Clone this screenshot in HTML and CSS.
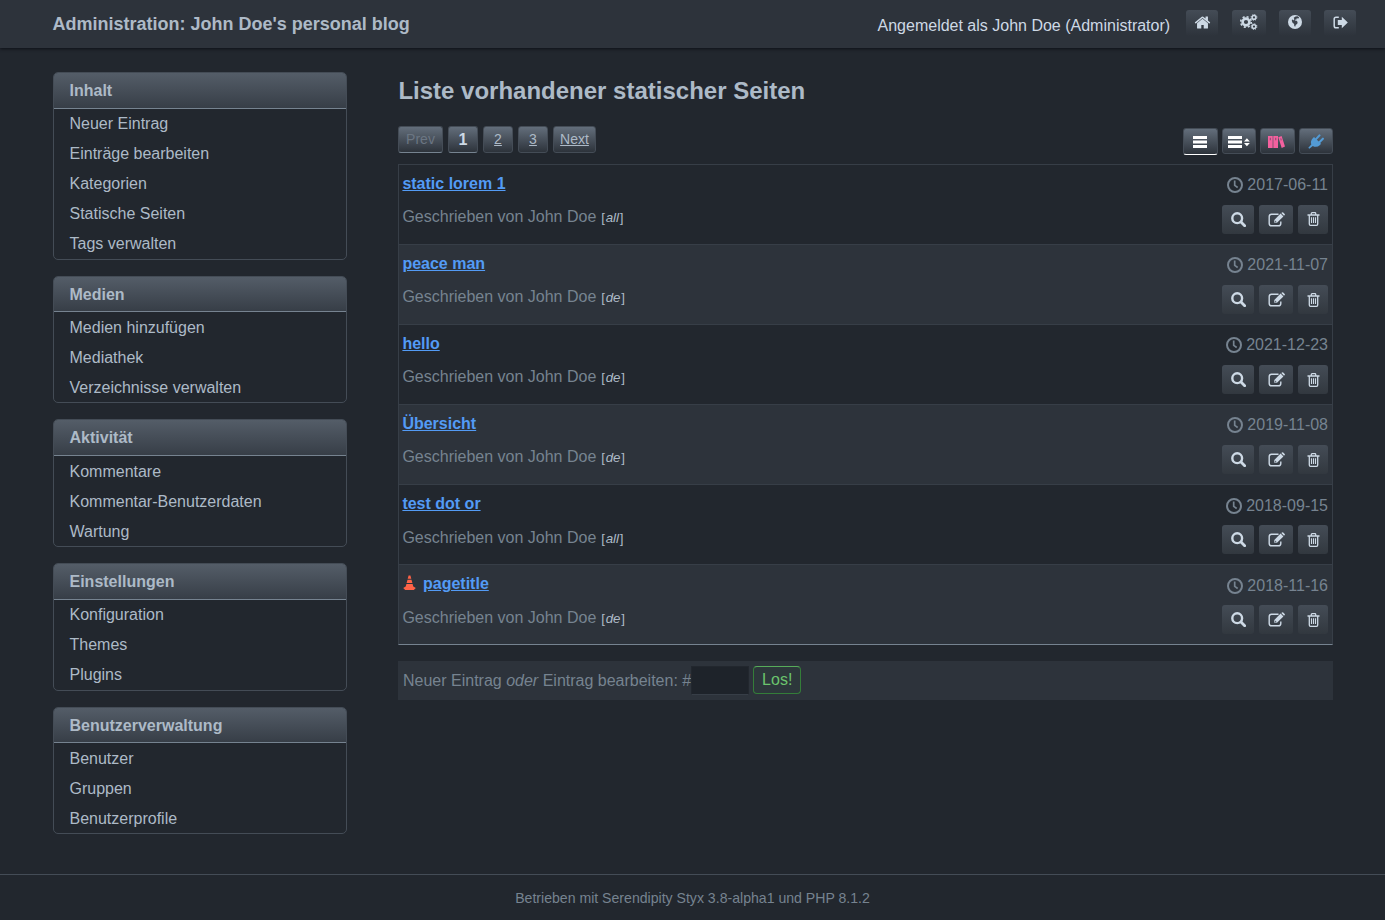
FILE: index.html
```html
<!DOCTYPE html>
<html lang="de">
<head>
<meta charset="utf-8">
<title>Administration</title>
<link rel="stylesheet" href="styles.css">
</head>
<body>
<svg class="sprite" aria-hidden="true">
  <symbol id="home" viewBox="0 0 1792 1792"><path d="M1472 992v480q0 26-19 45t-45 19h-384v-384h-256v384h-384q-26 0-45-19t-19-45v-480q0-1 .5-3t.5-3l575-474 575 474q1 2 1 6zm223-69l-62 74q-8 9-21 11h-3q-13 0-21-7l-692-577-692 577q-12 8-24 7-13-2-21-11l-62-74q-8-10-7-23.5t11-21.5l719-599q32-26 76-26t76 26l244 204v-195q0-14 9-23t23-9h192q14 0 23 9t9 23v408l219 182q10 8 11 21.5t-7 23.5z"/></symbol>
  <symbol id="cogs" viewBox="0 0 18 16">
    <g fill="none" stroke="currentColor">
      <circle cx="6" cy="8" r="3.4" stroke-width="2.6"/><circle cx="6" cy="8" r="5.3" stroke-width="1.6" stroke-dasharray="2.08 2.08"/>
      <circle cx="14" cy="3.4" r="1.9" stroke-width="1.5"/><circle cx="14" cy="3.4" r="2.9" stroke-width="1" stroke-dasharray="1.14 1.14"/>
      <circle cx="14" cy="12.6" r="1.9" stroke-width="1.5"/><circle cx="14" cy="12.6" r="2.9" stroke-width="1" stroke-dasharray="1.14 1.14"/>
    </g>
  </symbol>
  <symbol id="globe" viewBox="0 0 14 14"><circle cx="7" cy="7" r="7"/><path class="cut" d="M7.6 1.4 9.600 1.300l1.600 1.300-.8.9-1.700-.2-.3 1.300-1.700.1.300.9 1.600.1 1 1.400-.3 1.700-1.600 1.300-.5 1.700-.9-.9-.2-2-1.700-1.300L4 6.300 3.800 5l1-.4.9.9.6-1.500L5.700 2.800z"/></symbol>
  <symbol id="exit" viewBox="0 0 15 13"><path d="M5.8 1.2H3A1.8 1.8 0 0 0 1.2 3v7A1.8 1.8 0 0 0 3 11.8h2.8" fill="none" stroke="currentColor" stroke-width="1.5"/><path d="M4.8 4.1h4V.8l6 5.700-6 5.700V8.9h-4z"/></symbol>
  <symbol id="search" viewBox="0 0 15 15"><circle cx="6.2" cy="6.2" r="4.9" fill="none" stroke="currentColor" stroke-width="2.4"/><path d="m10 10 3.7 3.7" stroke="currentColor" stroke-width="2.8" stroke-linecap="round"/></symbol>
  <symbol id="edit" viewBox="0 0 17 15"><path d="M10.500 2.200H3.600Q1.200 2.200 1.200 4.600v6.800q0 2.400 2.400 2.400h6.800q2.400 0 2.400-2.400V9.600" fill="none" stroke="currentColor" stroke-width="1.4"/><path d="M12.600 1.600 15.400 4.400 9 10.700H6.300V7.900zM13.300 1l.7-.6q.6-.5 1.200 0l1.500 1.500q.5.600 0 1.200l-.7.700z"/><path class="cut" d="m7.200 8.600 1.300 1.300-.4.300h-.900z"/></symbol>
  <symbol id="trash" viewBox="0 0 13 14"><path d="M.5 3h12M4.3 3V1.5q0-.8.8-.8h2.8q.8 0 .8.8V3M2.3 3v9q0 1.3 1.2 1.3h6q1.2 0 1.2-1.3V3" fill="none" stroke="currentColor" stroke-width="1.3"/><path d="M4.5 5.3v5.8M6.5 5.3v5.8M8.5 5.3v5.8" stroke="currentColor" stroke-width="1.1"/></symbol>
  <symbol id="clock" viewBox="0 0 16 16"><circle cx="8" cy="8" r="7" fill="none" stroke="currentColor" stroke-width="2"/><path d="M7.700 3.6v4.800l3 2.100" fill="none" stroke="currentColor" stroke-width="1.7"/></symbol>
  <symbol id="list" viewBox="0 0 14 12"><path d="M0 0h14v3H0zM0 4.500h14v3H0zM0 9h14v3H0z"/></symbol>
  <symbol id="sort" viewBox="0 0 22 12"><path d="M0 0h14v3H0zM0 4.500h14v3H0zM0 9h14v3H0zM16 5.500l2.900-3.300 2.900 3.300zM16 7l2.900 3.300L21.800 7z"/></symbol>
  <symbol id="books" viewBox="0 0 17 12"><path d="M0 0h4.700v12H0zM5.300 0H10v12H5.300zM10.300 1.300 13.600 0 17 10.500 13.700 12z"/><path class="slot" d="M1.700 1.700H3v2.600H1.700zM7 1.700h1.300v2.600H7zM12.100 2.600l1.100-.4.700 2-1.100.4z"/></symbol>
  <symbol id="plug" viewBox="0 0 16 15"><path d="m6 3.1 7 6.700-1 1.200Q8.500 14.200 4.800 11.900L1.300 14.700.3 13.800 3.300 10.600Q2 7 5 4z"/><path d="m8 5.1 3.5-3.700M11.400 8.300l3.5-3.600" stroke="currentColor" stroke-width="2.1" stroke-linecap="round"/></symbol>
  <symbol id="cone" viewBox="0 0 13 16"><path d="M5.600.4h1.800l.9 3.400H4.700zM4.500 4.800h4l.9 3.200H3.600zM3.400 9.100h6.200l.7 2.400 2.500 1.500-2 1.900H2.200L.2 13l2.500-1.500z"/></symbol>
</svg>

<header class="topbar">
  <h1>Administration: John Doe's personal blog</h1>
  <div class="user">
    <span>Angemeldet als John Doe (Administrator)</span>
    <nav class="user-nav">
      <a class="btn"><svg class="i16"><use href="#home"/></svg></a>
      <a class="btn wide"><svg class="i-cogs"><use href="#cogs"/></svg></a>
      <a class="btn"><svg class="i14"><use href="#globe"/></svg></a>
      <a class="btn"><svg class="i-exit"><use href="#exit"/></svg></a>
    </nav>
  </div>
</header>

<div class="layout">
  <nav class="sidebar">
    <section><h2>Inhalt</h2><ul><li>Neuer Eintrag</li><li>Einträge bearbeiten</li><li>Kategorien</li><li>Statische Seiten</li><li>Tags verwalten</li></ul></section>
    <section><h2>Medien</h2><ul><li>Medien hinzufügen</li><li>Mediathek</li><li>Verzeichnisse verwalten</li></ul></section>
    <section><h2>Aktivität</h2><ul><li>Kommentare</li><li>Kommentar-Benutzerdaten</li><li>Wartung</li></ul></section>
    <section><h2>Einstellungen</h2><ul><li>Konfiguration</li><li>Themes</li><li>Plugins</li></ul></section>
    <section><h2>Benutzerverwaltung</h2><ul><li>Benutzer</li><li>Gruppen</li><li>Benutzerprofile</li></ul></section>
  </nav>

  <main>
    <h2 class="title">Liste vorhandener statischer Seiten</h2>
    <div class="tools">
      <div class="pager">
        <span class="page prev">Prev</span><span class="page current">1</span><a class="page">2</a><a class="page">3</a><a class="page next">Next</a>
      </div>
      <div class="views">
        <a class="view active"><svg class="i-list"><use href="#list"/></svg></a>
        <a class="view"><svg class="i-sort"><use href="#sort"/></svg></a>
        <a class="view pink"><svg class="i-books"><use href="#books"/></svg></a>
        <a class="view blue"><svg class="i-plug"><use href="#plug"/></svg></a>
      </div>
    </div>

    <ul class="entries">
      <li><div class="info"><h3><a>static lorem 1</a></h3><p>Geschrieben von John Doe <small>[<em>all</em>]</small></p></div>
        <div class="side"><time><svg class="i-clock"><use href="#clock"/></svg>2017-06-11</time><div class="acts"><a class="btn"><svg class="i-search"><use href="#search"/></svg></a><a class="btn wide"><svg class="i-edit"><use href="#edit"/></svg></a><a class="btn slim"><svg class="i-trash"><use href="#trash"/></svg></a></div></div></li>
      <li><div class="info"><h3><a>peace man</a></h3><p>Geschrieben von John Doe <small>[<em>de</em>]</small></p></div>
        <div class="side"><time><svg class="i-clock"><use href="#clock"/></svg>2021-11-07</time><div class="acts"><a class="btn"><svg class="i-search"><use href="#search"/></svg></a><a class="btn wide"><svg class="i-edit"><use href="#edit"/></svg></a><a class="btn slim"><svg class="i-trash"><use href="#trash"/></svg></a></div></div></li>
      <li><div class="info"><h3><a>hello</a></h3><p>Geschrieben von John Doe <small>[<em>de</em>]</small></p></div>
        <div class="side"><time><svg class="i-clock"><use href="#clock"/></svg>2021-12-23</time><div class="acts"><a class="btn"><svg class="i-search"><use href="#search"/></svg></a><a class="btn wide"><svg class="i-edit"><use href="#edit"/></svg></a><a class="btn slim"><svg class="i-trash"><use href="#trash"/></svg></a></div></div></li>
      <li><div class="info"><h3><a>Übersicht</a></h3><p>Geschrieben von John Doe <small>[<em>de</em>]</small></p></div>
        <div class="side"><time><svg class="i-clock"><use href="#clock"/></svg>2019-11-08</time><div class="acts"><a class="btn"><svg class="i-search"><use href="#search"/></svg></a><a class="btn wide"><svg class="i-edit"><use href="#edit"/></svg></a><a class="btn slim"><svg class="i-trash"><use href="#trash"/></svg></a></div></div></li>
      <li><div class="info"><h3><a>test dot or</a></h3><p>Geschrieben von John Doe <small>[<em>all</em>]</small></p></div>
        <div class="side"><time><svg class="i-clock"><use href="#clock"/></svg>2018-09-15</time><div class="acts"><a class="btn"><svg class="i-search"><use href="#search"/></svg></a><a class="btn wide"><svg class="i-edit"><use href="#edit"/></svg></a><a class="btn slim"><svg class="i-trash"><use href="#trash"/></svg></a></div></div></li>
      <li><div class="info"><h3><svg class="i-cone"><use href="#cone"/></svg><a>pagetitle</a></h3><p>Geschrieben von John Doe <small>[<em>de</em>]</small></p></div>
        <div class="side"><time><svg class="i-clock"><use href="#clock"/></svg>2018-11-16</time><div class="acts"><a class="btn"><svg class="i-search"><use href="#search"/></svg></a><a class="btn wide"><svg class="i-edit"><use href="#edit"/></svg></a><a class="btn slim"><svg class="i-trash"><use href="#trash"/></svg></a></div></div></li>
    </ul>

    <form class="goto"><label for="num">Neuer Eintrag <em>oder</em> Eintrag bearbeiten: #</label><input id="num" type="text"><button type="button">Los!</button></form>
  </main>
</div>

<footer>Betrieben mit Serendipity Styx 3.8-alpha1 und PHP 8.1.2</footer>
</body>
</html>
```
FILE: styles.css
```css
* { box-sizing: border-box; }
body {
  margin: 0;
  height: 920px;
  display: flex;
  flex-direction: column;
  overflow: hidden;
  background: #22272e;
  color: #adbac7;
  font: 16px/24px "Liberation Sans", Arial, sans-serif;
}
h1, h2, h3, p, ul { margin: 0; padding: 0; }
ul { list-style: none; }
svg { display: block; fill: currentColor; flex: none; }
.sprite { position: absolute; width: 0; height: 0; }

.topbar {
  height: 48px;
  flex: none;
  display: flex;
  justify-content: space-between;
  align-items: flex-start;
  padding: 0 29px 0 52.5px;
  background: #2d333b;
  box-shadow: 0 1px 3px #0d1117;
}
.topbar h1 { font-size: 18px; line-height: 24px; padding-top: 12px; }
.user { display: flex; gap: 16px; color: #cdd9e5; }
.user > span { padding-top: 14px; }
.user-nav { display: flex; gap: 13.3px; padding-top: 10px; }
.btn {
  width: 32px;
  height: 26px;
  display: flex;
  align-items: center;
  justify-content: center;
  border-radius: 3px;
  color: #cdd9e5;
  background: linear-gradient(#444c56, #2d333b);
}
.btn.wide { width: 34px; }
.user-nav .btn { padding-bottom: 2px; }
.user-nav .btn.wide { margin: 0 -0.5px 0 0.5px; padding-left: 1px; }

.layout { display: flex; gap: 51px; padding: 24px 52px 0 53px; height: 826px; flex: none; }
.sidebar { width: 294px; display: flex; flex-direction: column; gap: 16px; }
.sidebar section { border: 1px solid #444c56; border-radius: 5px; overflow: hidden; flex: none; }
.sidebar h2 {
  height: 35.7px;
  padding: 0 15.5px;
  font-size: 16px;
  line-height: 35.4px;
  border-bottom: 1px solid #768390;
  background: linear-gradient(#545d68, #373e47);
}
.sidebar li { height: 30px; line-height: 30px; padding: 0.5px 0 0 15.5px; }

main { flex: 1; min-width: 0; }
.title { font-size: 24px; line-height: 36px; padding: 1px 0 0 0.4px; }
.tools { display: flex; justify-content: space-between; height: 55px; padding-top: 17px; }
.pager { display: flex; gap: 5px; }
.page {
  width: 30px;
  height: 27px;
  border: 1px solid #444c56;
  border-radius: 3px;
  background: linear-gradient(#636e7b, #2d333b);
  font-size: 14px;
  line-height: 25px;
  text-align: center;
  text-decoration: underline;
}
.page.prev { width: 45px; color: #6b7683; text-decoration: none; border-bottom-color: #768390; }
.page.next { width: 43px; }
.page.current { font-size: 16px; font-weight: bold; color: #cdd9e5; text-decoration: none; border-bottom-color: #768390; }
.views { display: flex; gap: 4px; padding-top: 2px; }
.view {
  width: 34.5px;
  height: 26px;
  display: flex;
  align-items: center;
  justify-content: center;
  padding-top: 2px;
  border: 1px solid #444c56;
  border-radius: 3px;
  color: #fff;
  background: linear-gradient(#636e7b, #2d333b);
}
.view.active { height: 27px; padding-top: 1px; border-bottom-color: #fff; }
.view.pink { padding-right: 2px; color: #f4619f; }
.view.blue { padding-top: 1px; color: #539bd5; }

.entries { border: 1px solid #373e47; border-bottom-color: #768390; }
.entries li { height: 80.09px; display: flex; justify-content: space-between; padding: 0 4px 0 3.4px; border-top: 1px solid #373e47; }
.entries li:first-child { border-top: 0; height: 79.09px; padding-top: 0; }
.entries li:nth-child(even) { background: #2d333b; }
h3 { font-size: 16px; line-height: 24px; padding-top: 7px; display: flex; }
h3 a { color: #539bf5; text-decoration: underline; }
.info p { padding-top: 9.23px; color: #768390; }
small { font-size: 13.33px; margin-left: 0.5px; color: #adbac7; }
small em { margin: 0 0.7px; }
.side { display: flex; flex-direction: column; align-items: flex-end; }
time { display: flex; align-items: center; gap: 4px; padding-top: 8.23px; color: #768390; }
.acts { display: flex; gap: 5px; padding-top: 7.77px; }
.acts .btn { height: 29px; background: linear-gradient(#444c56, #32383f); }
.acts .btn.slim { width: 30px; }

.goto { display: flex; align-items: center; height: 39px; margin-top: 15.8px; padding-left: 5px; background: #2d333b; color: #768390; }
.goto input { width: 58px; height: 29px; border: 1px solid #22272e; border-bottom-color: #373e47; background: #1e232a; }
.goto button {
  width: 48px;
  height: 28px;
  margin: 0 0 1px 4px;
  padding: 0;
  border: 1px solid #347d39;
  border-top-color: #57ab5a;
  border-radius: 4px;
  background: #2d373b;
  color: #6bc46d;
  font: 16px "Liberation Sans", Arial, sans-serif;
}

footer { flex: 1; border-top: 1px solid #444c56; text-align: center; font-size: 14.1px; line-height: 46px; color: #768390; }

.cut { fill: #3b424c; }
.slot { fill: #9c5179; }
.i16 { width: 17px; height: 17px; }
.i-cogs { width: 18px; height: 16px; }
.i14 { width: 14px; height: 14px; }
.i-exit { width: 15px; height: 13px; }
.i-search { width: 15px; height: 15px; }
.i-edit { width: 17px; height: 15px; }
.i-trash { width: 13px; height: 14px; }
.i-clock { width: 16px; height: 16px; }
.i-list { width: 14px; height: 12px; }
.i-sort { width: 22px; height: 12px; }
.i-books { width: 17px; height: 12px; }
.i-plug { width: 16px; height: 15px; }
.i-cone { width: 13px; height: 16px; margin: 3px 7px 0 0.6px; color: #ff6347; }
```
